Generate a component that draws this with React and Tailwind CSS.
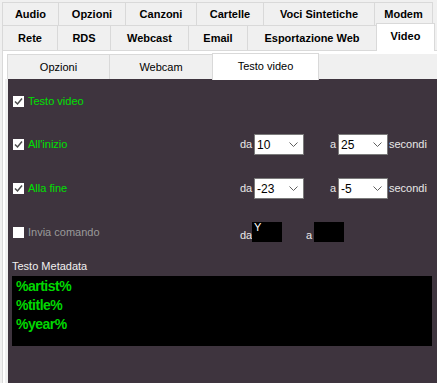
import React from 'react';

const topRow = [
  { label: 'Audio', w: 56 },
  { label: 'Opzioni', w: 67 },
  { label: 'Canzoni', w: 71 },
  { label: 'Cartelle', w: 67 },
  { label: 'Voci Sintetiche', w: 111 },
  { label: 'Modem', w: 59 },
];

const bottomRow = [
  { label: 'Rete', w: 55 },
  { label: 'RDS', w: 53 },
  { label: 'Webcast', w: 78 },
  { label: 'Email', w: 59 },
  { label: 'Esportazione Web', w: 129 },
  { label: 'Video', w: 59, active: true },
];

const innerTabs = [
  { label: 'Opzioni', w: 102 },
  { label: 'Webcam', w: 103 },
  { label: 'Testo video', w: 107, active: true },
];

function Check({ checked }) {
  return (
    <div className="w-[11px] h-[11px] bg-white flex items-center justify-center shrink-0">
      {checked && (
        <svg width="9" height="9" viewBox="0 0 9 9">
          <path d="M1 4.5 L3.5 7 L8 1.5" fill="none" stroke="#4a4a4a" strokeWidth="1.5" />
        </svg>
      )}
    </div>
  );
}

function Combo({ value }) {
  return (
    <div className="w-[50px] h-[21px] bg-white border border-[#7a7a7a] flex items-center justify-between pl-[2px] pr-[5px]">
      <span className="text-[12px] text-black leading-none">{value}</span>
      <svg width="9" height="6" viewBox="0 0 9 6">
        <path d="M0.5 0.5 L4.5 4.5 L8.5 0.5" fill="none" stroke="#606060" strokeWidth="1" />
      </svg>
    </div>
  );
}

function CheckLabel({ checked, label, muted }) {
  return (
    <div className="w-[232px] flex items-center gap-[4px] pl-[5px]">
      <Check checked={checked} />
      <span className={muted ? 'text-[#9a9a9a]' : 'text-[#00e000]'}>{label}</span>
    </div>
  );
}

export default function App() {
  return (
    <div className="w-[437px] h-[383px] bg-[#f0f0f0] overflow-hidden font-['Liberation_Sans',Arial,sans-serif] text-[11px] flex flex-col">
      <div className="flex h-[23px] mt-[2px] ml-[2px]">
        {topRow.map((t, i) => (
          <div
            key={t.label}
            style={{ width: t.w }}
            className={`flex items-center justify-center font-bold text-black border-t border-l border-[#d9d9d9] ${i === topRow.length - 1 ? 'border-r' : ''}`}
          >
            {t.label}
          </div>
        ))}
      </div>
      <div className="flex items-end h-[25px] ml-[2px] relative z-10">
        {bottomRow.map((t) =>
          t.active ? (
            <div
              key={t.label}
              style={{ width: t.w }}
              className="h-[28px] -mb-[1px] bg-white flex items-center justify-center font-bold text-black border-t border-l border-r border-[#d9d9d9] pb-[2px]"
            >
              {t.label}
            </div>
          ) : (
            <div
              key={t.label}
              style={{ width: t.w }}
              className="h-[25px] flex items-center justify-center font-bold text-black border-t border-l border-[#d9d9d9]"
            >
              {t.label}
            </div>
          )
        )}
      </div>
      <div className="flex-1 ml-[2px] border-t border-l border-[#d9d9d9] bg-white pl-[2px] pt-[1px] flex flex-col">
        <div className="flex-1 bg-[#f0f0f0] flex flex-col">
          <div className="flex items-end h-[27px] pl-[2px] bg-white">
            <div className="flex items-end h-[25px] bg-[#f0f0f0] flex-1">
              {innerTabs.map((t) =>
                t.active ? (
                  <div
                    key={t.label}
                    style={{ width: t.w }}
                    className="h-[27px] -mb-[1px] relative bg-white flex items-center justify-center text-black border-t border-l border-r border-[#d9d9d9] pb-[1px]"
                  >
                    {t.label}
                  </div>
                ) : (
                  <div
                    key={t.label}
                    style={{ width: t.w }}
                    className="h-[25px] flex items-center justify-center text-black border-t border-l border-[#d9d9d9]"
                  >
                    {t.label}
                  </div>
                )
              )}
            </div>
          </div>
          <div className="flex-1 ml-[3px] bg-[#3e343e] flex flex-col pt-[16px]">
            <div className="flex items-center h-[13px]">
              <CheckLabel checked label="Testo video" />
            </div>
            <div className="flex items-center h-[21px] mt-[26px] text-[#e8e8e8]">
              <CheckLabel checked label="All'inizio" />
              <span className="w-[14px]">da</span>
              <Combo value="10" />
              <span className="w-[34px] text-right pr-[2px]">a</span>
              <Combo value="25" />
              <span className="ml-[1px]">secondi</span>
            </div>
            <div className="flex items-center h-[21px] mt-[23px] text-[#e8e8e8]">
              <CheckLabel checked label="Alla fine" />
              <span className="w-[14px]">da</span>
              <Combo value="-23" />
              <span className="w-[34px] text-right pr-[2px]">a</span>
              <Combo value="-5" />
              <span className="ml-[1px]">secondi</span>
            </div>
            <div className="flex items-center h-[20px] mt-[23px] text-[#e8e8e8]">
              <CheckLabel label="Invia comando" muted />
              <span className="w-[12px] self-end leading-[14px]">da</span>
              <div className="w-[30px] h-[20px] bg-black text-white text-[11px] leading-none pl-[2px]">Y</div>
              <span className="w-[32px] pl-[24px] self-end leading-[14px]">a</span>
              <div className="w-[30px] h-[20px] bg-black" />
            </div>
            <div className="mt-[18px] pl-[4px] text-[#f0f0f0] leading-[13px]">Testo Metadata</div>
            <div className="mt-[3px] ml-[4px] w-[420px] h-[70px] bg-black pt-[1px] pl-[4px] font-bold text-[14px] tracking-[-0.5px] leading-[19px] text-[#00d800]">
              <div>%artist%</div>
              <div>%title%</div>
              <div>%year%</div>
            </div>
          </div>
        </div>
      </div>
    </div>
  );
}
